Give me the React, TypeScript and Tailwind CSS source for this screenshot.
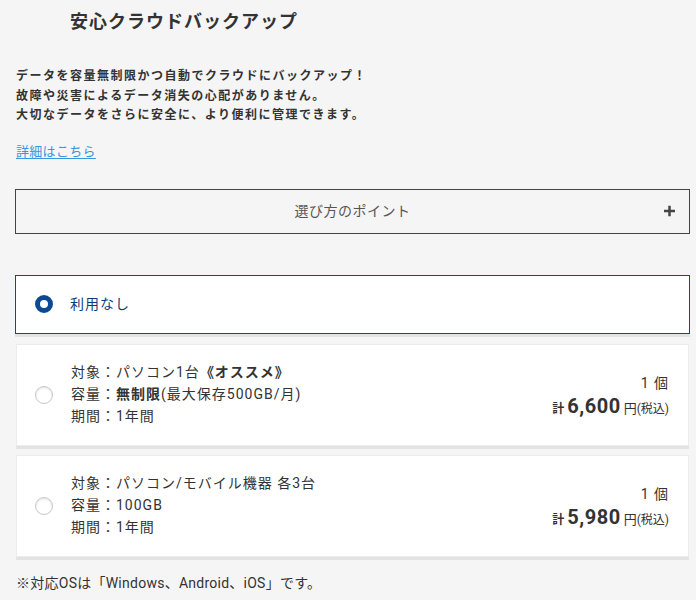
import React from "react";

const font = { fontFamily: "Roboto, 'Noto Sans CJK JP', sans-serif" };

function Radio({ checked }: { checked?: boolean }) {
  if (checked) {
    return (
      <span className="block w-[18px] h-[18px] rounded-full border-[5.5px] border-[#0b4a92] bg-white shrink-0" />
    );
  }
  return (
    <span className="block w-[18px] h-[18px] rounded-full border border-[#c8c8c8] bg-white shadow-[inset_0_1px_2px_rgba(0,0,0,0.12)] shrink-0" />
  );
}

function Plan({
  lines,
  price,
}: {
  lines: React.ReactNode[];
  price: string;
}) {
  return (
    <div className="flex items-center bg-white border border-[#ececec] shadow-[0_3px_0_#e3e3e3] mx-[1px] h-[102px] pl-[18px] pr-[19px]">
      <Radio />
      <div className="ml-[18px] mt-[-2px] flex flex-col text-[14px] leading-[22px] text-[#333] tracking-[1px]">
        {lines.map((l, i) => (
          <div key={i}>{l}</div>
        ))}
      </div>
      <div className="ml-auto flex flex-col items-end text-[#333] mt-[6px]">
        <div className="text-[14px] leading-[20px] tracking-[1px]">1 個</div>
        <div className="flex items-baseline leading-[26px]">
          <span className="text-[12px] font-bold mr-[3px]">計</span>
          <span className="text-[20px] font-bold tracking-[0.5px] mr-[3px]">{price}</span>
          <span className="text-[13px]">円</span>
          <span className="text-[12px]">(税込)</span>
        </div>
      </div>
    </div>
  );
}

export default function App() {
  return (
    <div className="min-h-[600px] bg-[#f5f5f5] pl-[15px] pr-[6px] w-[696px] overflow-hidden" style={font}>
      <div className="pt-[10px] pl-[55px] text-[18px] leading-[24px] font-bold text-[#333] tracking-[1px]">
        安心クラウドバックアップ
      </div>
      <div className="mt-[33px] pl-[1px] text-[12px] leading-[19.5px] font-bold text-[#333] tracking-[1.5px]">
        <div>データを容量無制限かつ自動でクラウドにバックアップ！</div>
        <div>故障や災害によるデータ消失の心配がありません。</div>
        <div>大切なデータをさらに安全に、より便利に管理できます。</div>
      </div>
      <div className="mt-[17px] pl-[1px] text-[13px] leading-[18px] tracking-[0.3px]">
        <a className="text-[#3a96dc] underline underline-offset-2">詳細はこちら</a>
      </div>
      <div className="mt-[28px] relative h-[45px] border border-[#444] flex items-center justify-center text-[14px] text-[#555] tracking-[0.5px]">
        選び方のポイント
        <span className="absolute right-[14px] top-1/2 -translate-y-1/2 text-[#444]">
          <svg width="11" height="11" viewBox="0 0 11 11">
            <rect x="0" y="4.25" width="11" height="2.5" fill="#444" />
            <rect x="4.25" y="0" width="2.5" height="11" fill="#444" />
          </svg>
        </span>
      </div>
      <div className="mt-[41px] h-[59px] bg-white border border-[#0b4a92] shadow-[0_3px_0_#e3e3e3] flex items-center pl-[19px]">
        <Radio checked />
        <span className="ml-[17px] text-[14px] text-[#0b3c7a] tracking-[1px]">利用なし</span>
      </div>
      <div className="mt-[10px]">
        <Plan
          lines={[
            <>
              対象：パソコン1台<span className="font-bold">《オススメ》</span>
            </>,
            <>
              容量：<span className="font-bold">無制限</span>
              <span>(最大保存500GB/月)</span>
            </>,
            <>期間：1年間</>,
          ]}
          price="6,600"
        />
      </div>
      <div className="mt-[9px]">
        <Plan
          lines={[
            <>対象：パソコン/モバイル機器 各3台</>,
            <>容量：100GB</>,
            <>期間：1年間</>,
          ]}
          price="5,980"
        />
      </div>
      <div className="mt-[16px] pl-[1px] text-[14px] leading-[20px] text-[#333] tracking-[0.25px]">
        ※対応OSは「Windows、Android、iOS」です。
      </div>
    </div>
  );
}
